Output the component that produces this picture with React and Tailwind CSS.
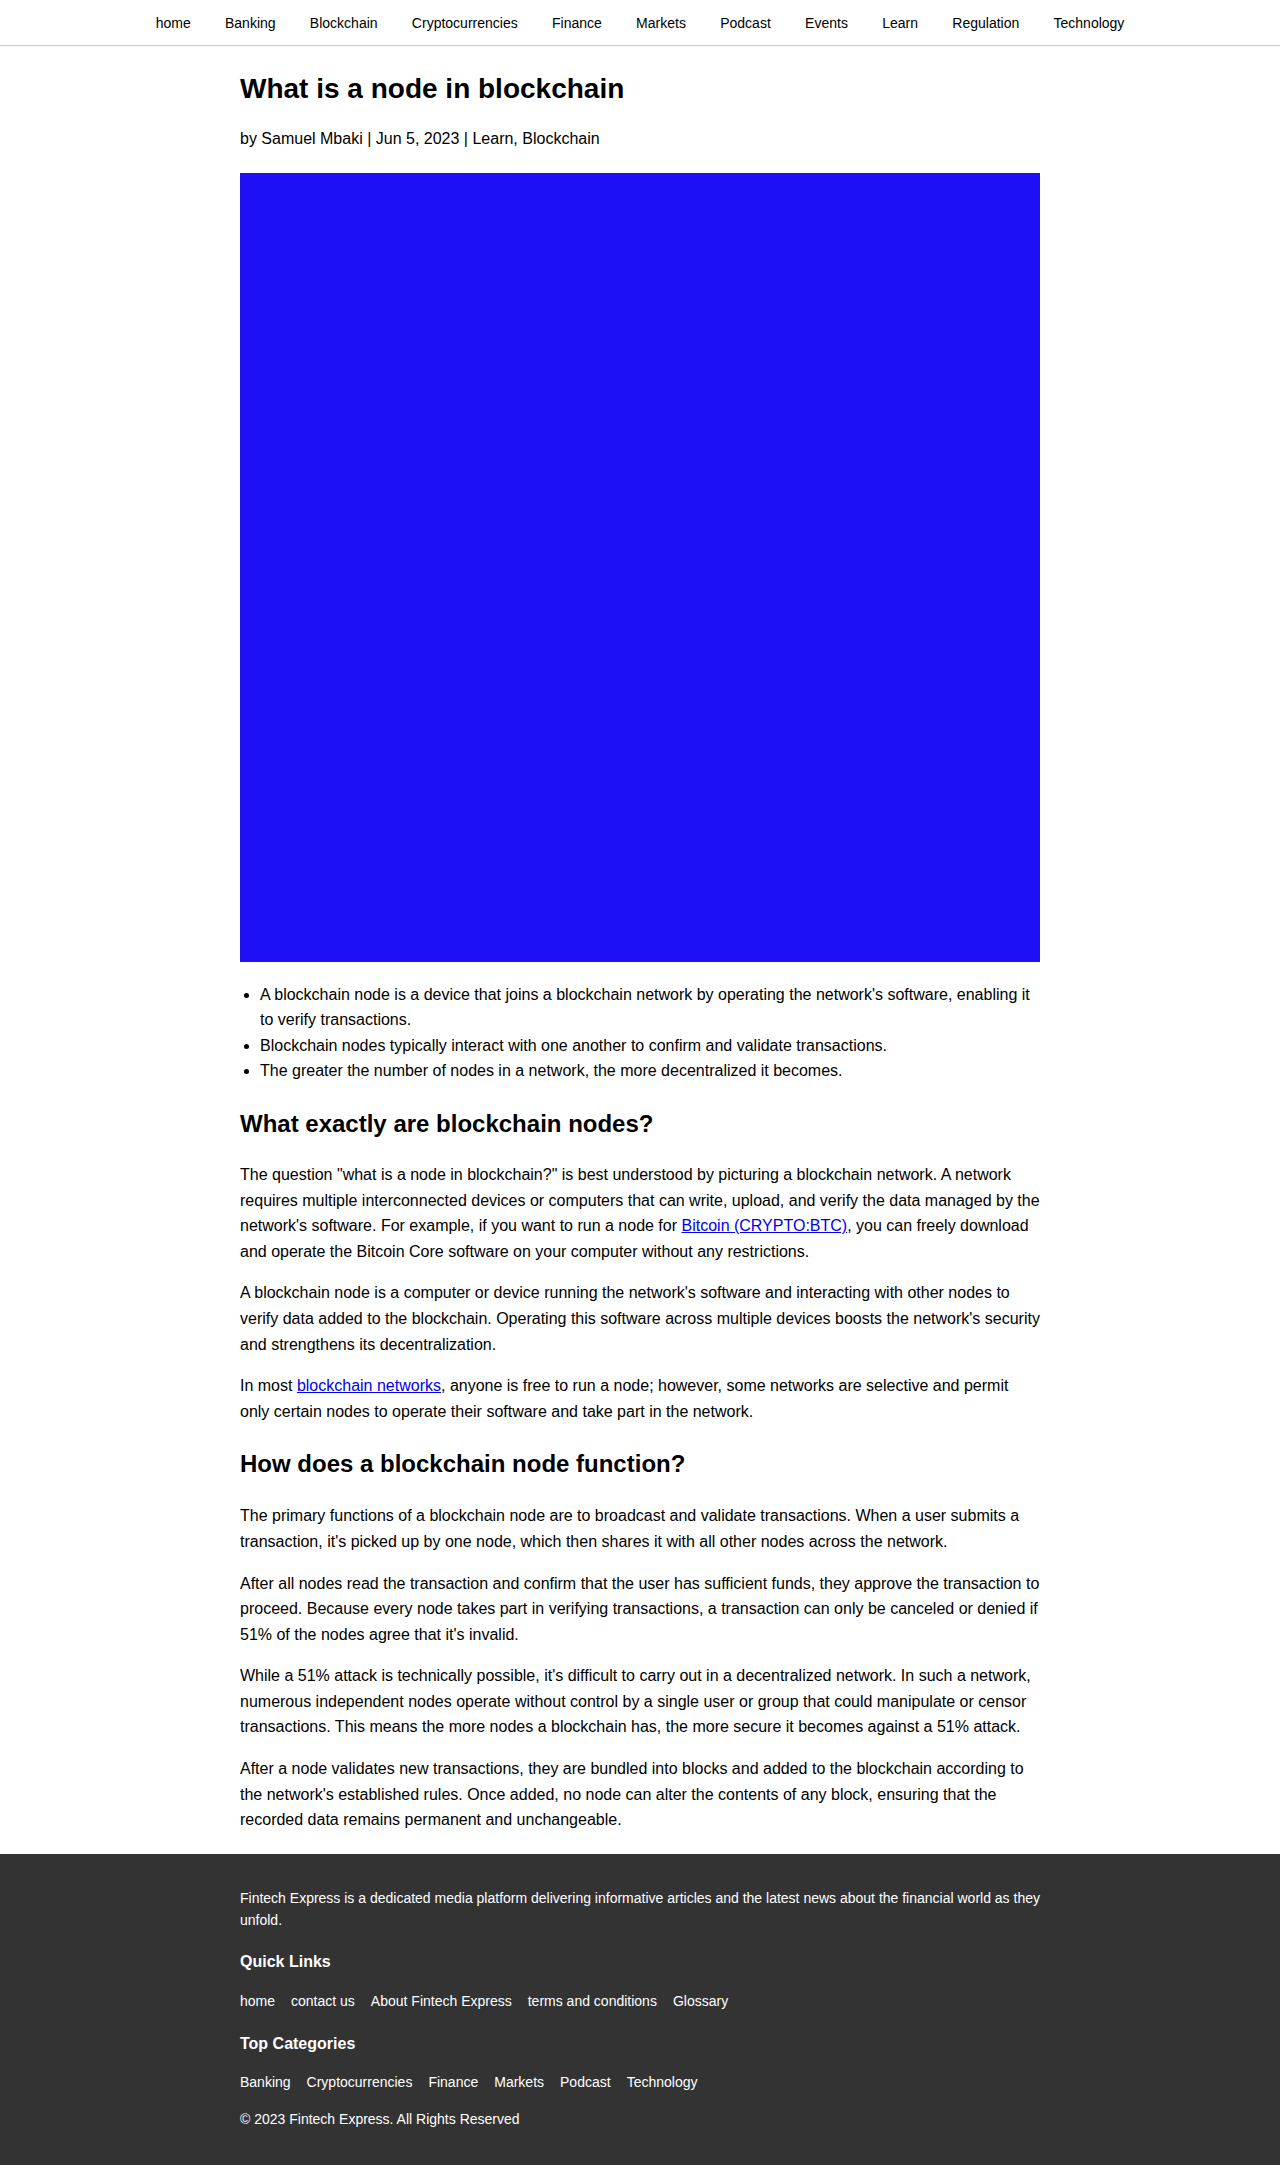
const navLinks = [
  "home",
  "Banking",
  "Blockchain",
  "Cryptocurrencies",
  "Finance",
  "Markets",
  "Podcast",
  "Events",
  "Learn",
  "Regulation",
  "Technology",
];

const quickLinks = ["home", "contact us", "About Fintech Express", "terms and conditions", "Glossary"];
const categories = ["Banking", "Cryptocurrencies", "Finance", "Markets", "Podcast", "Technology"];

export default function App() {
  return (
    <div className="min-h-screen flex flex-col bg-white text-black font-['Liberation_Sans',Arial,sans-serif]">
      {/* NAV */}
      <nav className="h-[46px] border-b border-[#c8c8c8] flex items-center justify-center">
        <ul className="flex gap-[34.3px] text-[14px] leading-[20px]">
          {navLinks.map((l) => (
            <li key={l}>
              <a href="#" className="text-black">{l}</a>
            </li>
          ))}
        </ul>
      </nav>

      {/* ARTICLE */}
      <main className="w-[800px] mx-auto pb-[21px]">
        <h1 className="text-[28px] leading-[34px] font-bold mt-[26px]">What is a node in blockchain</h1>
        <p className="text-[16px] leading-[25.6px] mt-[20px]">
          by Samuel Mbaki | Jun 5, 2023 | Learn, Blockchain
        </p>

        <div className="mt-[21px] h-[789px] w-full bg-[#1d10f5]" />

        <ul className="list-disc pl-5 mt-[20px] text-[16px] leading-[25.6px]">
          <li>
            A blockchain node is a device that joins a blockchain network by operating the network's software, enabling it
            to verify transactions.
          </li>
          <li>Blockchain nodes typically interact with one another to confirm and validate transactions.</li>
          <li>The greater the number of nodes in a network, the more decentralized it becomes.</li>
        </ul>

        <h2 className="text-[24px] leading-[29px] font-bold mt-[25px] mb-[24px]">What exactly are blockchain nodes?</h2>
        <div className="flex flex-col gap-4 text-[16px] leading-[25.6px]">
          <p>
            The question "what is a node in blockchain?" is best understood by picturing a blockchain network. A network
            requires multiple interconnected devices or computers that can write, upload, and verify the data managed by the
            network's software. For example, if you want to run a node for{" "}
            <a href="#" className="text-[#0000ee] underline">Bitcoin (CRYPTO:BTC)</a>, you can freely download and operate
            the Bitcoin Core software on your computer without any restrictions.
          </p>
          <p>
            A blockchain node is a computer or device running the network's software and interacting with other nodes to
            verify data added to the blockchain. Operating this software across multiple devices boosts the network's security
            and strengthens its decentralization.
          </p>
          <p>
            In most <a href="#" className="text-[#0000ee] underline">blockchain networks</a>, anyone is free to run a node;
            however, some networks are selective and permit only certain nodes to operate their software and take part in the
            network.
          </p>
        </div>

        <h2 className="text-[24px] leading-[29px] font-bold mt-[25px] mb-[25px]">How does a blockchain node function?</h2>
        <div className="flex flex-col gap-4 text-[16px] leading-[25.6px]">
          <p>
            The primary functions of a blockchain node are to broadcast and validate transactions. When a user submits a
            transaction, it's picked up by one node, which then shares it with all other nodes across the network.
          </p>
          <p>
            After all nodes read the transaction and confirm that the user has sufficient funds, they approve the transaction to
            proceed. Because every node takes part in verifying transactions, a transaction can only be canceled or denied if
            51% of the nodes agree that it's invalid.
          </p>
          <p>
            While a 51% attack is technically possible, it's difficult to carry out in a decentralized network. In such a network,
            numerous independent nodes operate without control by a single user or group that could manipulate or censor
            transactions. This means the more nodes a blockchain has, the more secure it becomes against a 51% attack.
          </p>
          <p>
            After a node validates new transactions, they are bundled into blocks and added to the blockchain according to
            the network's established rules. Once added, no node can alter the contents of any block, ensuring that the
            recorded data remains permanent and unchangeable.
          </p>
        </div>
      </main>

      {/* FOOTER */}
      <footer className="flex-1 bg-[#333333] text-white">
        <div className="w-[800px] mx-auto pt-[33px] pb-[34px]">
          <p className="text-[14px] leading-[22.4px]">
            Fintech Express is a dedicated media platform delivering informative articles and the latest news about the
            financial world as they unfold.
          </p>
          <h3 className="text-[16px] leading-[19px] font-bold mt-[20.5px]">Quick Links</h3>
          <ul className="flex gap-4 text-[14px] leading-[22.4px] mt-[19.3px]">
            {quickLinks.map((l) => (
              <li key={l}>
                <a href="#" className="text-white">{l}</a>
              </li>
            ))}
          </ul>
          <h3 className="text-[16px] leading-[19px] font-bold mt-[20.7px]">Top Categories</h3>
          <ul className="flex gap-4 text-[14px] leading-[22.4px] mt-[18.7px]">
            {categories.map((l) => (
              <li key={l}>
                <a href="#" className="text-white">{l}</a>
              </li>
            ))}
          </ul>
          <p className="text-[14px] leading-[22.4px] mt-[14.8px]">© 2023 Fintech Express. All Rights Reserved</p>
        </div>
      </footer>
    </div>
  );
}
